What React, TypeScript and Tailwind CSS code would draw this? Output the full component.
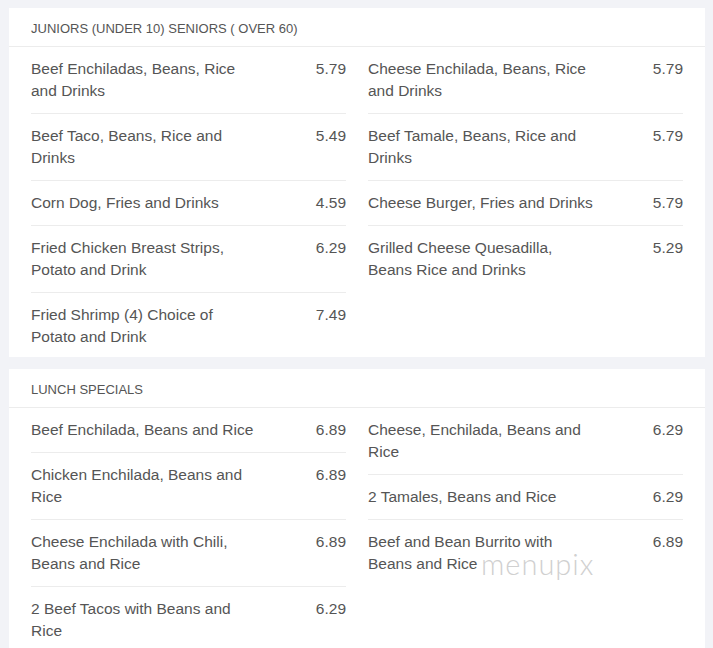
const juniors: [string, string][][] = [
  [
    ['Beef Enchiladas, Beans, Rice and Drinks', '5.79'],
    ['Beef Taco, Beans, Rice and Drinks', '5.49'],
    ['Corn Dog, Fries and Drinks', '4.59'],
    ['Fried Chicken Breast Strips, Potato and Drink', '6.29'],
    ['Fried Shrimp (4) Choice of Potato and Drink', '7.49'],
  ],
  [
    ['Cheese Enchilada, Beans, Rice and Drinks', '5.79'],
    ['Beef Tamale, Beans, Rice and Drinks', '5.79'],
    ['Cheese Burger, Fries and Drinks', '5.79'],
    ['Grilled Cheese Quesadilla, Beans Rice and Drinks', '5.29'],
  ],
]

const lunch: [string, string][][] = [
  [
    ['Beef Enchilada, Beans and Rice', '6.89'],
    ['Chicken Enchilada, Beans and Rice', '6.89'],
    ['Cheese Enchilada with Chili, Beans and Rice', '6.89'],
    ['2 Beef Tacos with Beans and Rice', '6.29'],
  ],
  [
    ['Cheese, Enchilada, Beans and Rice', '6.29'],
    ['2 Tamales, Beans and Rice', '6.29'],
    ['Beef and Bean Burrito with Beans and Rice', '6.89'],
  ],
]

function Column({ items }: { items: [string, string][] }) {
  return (
    <div className="flex flex-col">
      {items.map(([name, price], i) => (
        <div
          key={name}
          className={`flex pt-[11px] ${i < items.length - 1 ? 'pb-[11px] border-b border-[#ececec]' : 'pb-[9px]'}`}
        >
          <div className="w-[227px]">{name}</div>
          <div className="flex-1 text-right">{price}</div>
        </div>
      ))}
    </div>
  )
}

function Section({ title, cols, children }: { title: string; cols: [string, string][][]; children?: React.ReactNode }) {
  return (
    <div className="relative bg-white">
      <div className="border-b border-[#ececec] px-[22px] pt-[12px] pb-[8px] text-[13px] leading-[18px] uppercase text-[#555]">
        {title}
      </div>
      <div className="grid grid-cols-2 gap-[22px] px-[22px] text-[15.5px] leading-[22px] text-[#555]">
        {cols.map((c, i) => (
          <Column key={i} items={c} />
        ))}
      </div>
      {children}
    </div>
  )
}

export default function App() {
  return (
    <div
      className="min-h-[648px] bg-[#f2f3f7] pt-[8px] pl-[9px] pr-[8px]"
      style={{ fontFamily: '"Liberation Sans", Arial, sans-serif' }}
    >
      <div className="flex flex-col gap-[12px]">
        <Section title="Juniors (under 10) Seniors ( over 60)" cols={juniors} />
        <Section title="Lunch Specials" cols={lunch}>
          <div className="pointer-events-none absolute left-[472px] top-[173px] font-['Lato',sans-serif] text-[29px] font-light tracking-[1px] text-[#d0d0d0]">
            menupix
          </div>
        </Section>
      </div>
    </div>
  )
}
